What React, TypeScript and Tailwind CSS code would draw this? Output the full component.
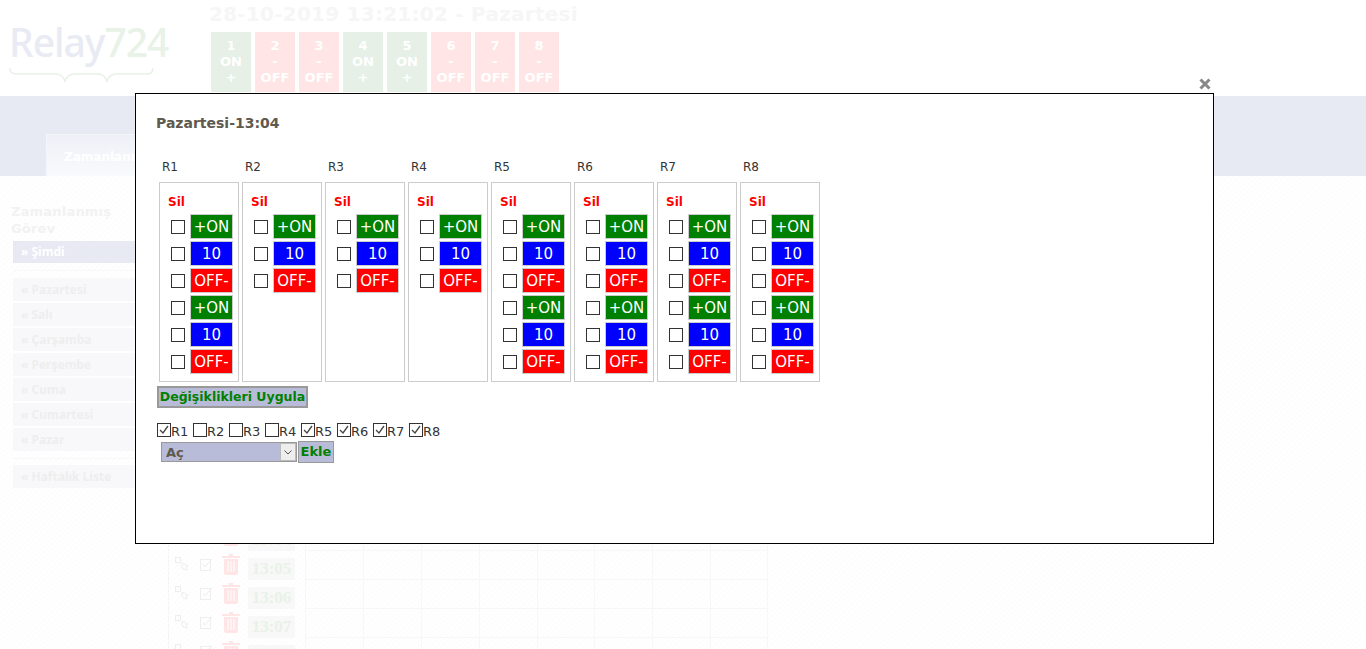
import React from 'react';

const tiles = [
  { n: 1, on: true },
  { n: 2, on: false },
  { n: 3, on: false },
  { n: 4, on: true },
  { n: 5, on: true },
  { n: 6, on: false },
  { n: 7, on: false },
  { n: 8, on: false },
];

const days = ['Pazartesi', 'Salı', 'Çarşamba', 'Perşembe', 'Cuma', 'Cumartesi', 'Pazar'];
const times = ['13:04', '13:05', '13:06', '13:07', '13:08'];

const Box: React.FC<{ checked?: boolean }> = ({ checked }) => (
  <span className="flex h-[14px] w-[14px] shrink-0 items-center justify-center border border-[#333333] bg-white">
    {checked && (
      <svg width="12" height="12" viewBox="0 0 12 12" fill="none">
        <path d="M2 6l3 3 5-7" stroke="#444444" strokeWidth="1.3" />
      </svg>
    )}
  </span>
);

const CmdRow: React.FC<{ label: string; bg: string }> = ({ label, bg }) => (
  <div className="flex h-[27px] items-center pl-[11px]">
    <Box />
    <span
      className={`ml-[5px] flex h-[25px] w-[43px] items-center justify-center border border-[#cccccc] pt-px text-[15px] text-white ${bg}`}
    >
      {label}
    </span>
  </div>
);

const CmdSet = () => (
  <>
    <CmdRow label="+ON" bg="bg-[#008000]" />
    <CmdRow label="10" bg="bg-[#0000ff]" />
    <CmdRow label="OFF-" bg="bg-[#ff0000]" />
  </>
);

const RelayColumn: React.FC<{ name: string; double: boolean }> = ({ name, double }) => (
  <div className="w-[80px]">
    <div className="h-[23px] pl-[3px] text-[12px] leading-[16px] text-[#333333]">{name}</div>
    <div className="h-[200px] border border-[#cccccc] pt-[11px]">
      <div className="h-[19px] pl-[8px] text-[12px] font-bold leading-[16px] text-[#ff0000]">Sil</div>
      <CmdSet />
      {double && <CmdSet />}
    </div>
  </div>
);

const BackgroundRow: React.FC<{ time: string }> = ({ time }) => (
  <div className="flex h-[29px]">
    <div className="flex w-[137px] items-start border-l border-dotted border-[#eeeeee] pl-[6px] pt-[4px]">
      <svg width="15" height="14" viewBox="0 0 15 14" fill="none" stroke="#eeeeee" className="mt-[3px]">
        <rect x="0.5" y="0.5" width="5" height="5" />
        <path d="M7 6l6 3-2 1 1 3-3-1-2-1z" />
      </svg>
      <svg width="14" height="13" viewBox="0 0 14 13" fill="none" stroke="#eeeeee" className="ml-[10px] mt-[4px]">
        <rect x="0.5" y="1.5" width="10" height="11" />
        <path d="M3 6l2 3 7-8" />
      </svg>
      <svg width="18" height="21" viewBox="0 0 18 21" className="ml-[8px]" fill="#ffe5e5">
        <path d="M7 0h4v2h7v2H0V2h7zM2 5h14v14a2 2 0 01-2 2H4a2 2 0 01-2-2z" />
        <path d="M6 7v11M9 7v11M12 7v11" stroke="#ffffff" />
      </svg>
      <div className="ml-[8px] mt-[4px] flex h-[22px] w-[47px] items-center justify-center bg-[#f8f8f8] font-['Liberation_Serif',serif] text-[17px] font-bold text-[#e8f2e6]">
        {time}
      </div>
    </div>
    <div className="grid w-[463px] grid-cols-8 border-t border-[#f7f7f7]">
      {Array.from({ length: 8 }).map((_, i) => (
        <div key={i} className="border-l border-[#f7f7f7] last:border-r" />
      ))}
    </div>
  </div>
);

export default function App() {
  return (
    <div className="relative h-[649px] w-[1366px] overflow-hidden bg-white font-['DejaVu_Sans',sans-serif]">
      {/* 背景ページ */}
      <header className="flex h-[96px]">
        <div className="w-[209px] pl-[9px] pt-[16px]">
          <div className="font-['Noto_Sans',sans-serif] text-[39px] font-medium leading-[52px] tracking-[-1px]">
            <span className="text-[#e8ebf3]">Relay</span>
            <span className="text-[#e8f2e6]">724</span>
          </div>
          <svg width="150" height="16" viewBox="0 0 150 16" fill="none" stroke="#e8f2e6" strokeWidth="1.5">
            <path d="M1 0c0 6 4 6 10 6h35c6 0 9 3 10 8 1-5 4-8 10-8h22c6 0 9 3 10 8 1-5 4-8 10-8h30c4 0 6-2 6-6" />
          </svg>
        </div>
        <div>
          <div className="h-[32px] whitespace-nowrap pt-px text-[20px] font-bold leading-[26px] tracking-[0.25px] text-[#f6f6f6]">
            28-10-2019 13:21:02 - Pazartesi
          </div>
          <div className="ml-[2px] flex gap-[4px]">
            {tiles.map(t => (
              <div
                key={t.n}
                className={`flex h-[60px] w-[40px] flex-col items-center justify-center text-[13px] font-bold leading-[16px] text-white ${
                  t.on ? 'bg-[#e6f0e6]' : 'bg-[#ffe5e5]'
                }`}
              >
                <span>{t.n}</span>
                <span>{t.on ? 'ON' : '-'}</span>
                <span>{t.on ? '+' : 'OFF'}</span>
              </div>
            ))}
          </div>
        </div>
      </header>

      <div className="flex h-[80px] items-end bg-[#e7eaf3] pl-[46px]">
        <div className="h-[42px] w-[180px] border border-b-0 border-[#f4f5fa] bg-gradient-to-b from-[#eef0f7] to-[#f9fafc] pl-[17px] pt-[13px] text-[12px] font-bold text-white">
          Zamanlanmış Görev
        </div>
      </div>

      <main className="flex h-[473px] bg-[repeating-linear-gradient(135deg,#fdfdfd_0px,#fdfdfd_2px,#ffffff_2px,#ffffff_4px)]">
        <aside className="w-[168px] pl-[13px] pt-[27px]">
          <div className="-ml-[2px] h-[38px] text-[13px] font-bold leading-[17px] tracking-[0.2px] text-[#f2f2f2]">
            Zamanlanmış
            <br />
            Görev
          </div>
          <div className="flex h-[22px] w-[140px] items-center bg-[#e7eaf3] pl-[8px] font-['Noto_Sans',sans-serif] text-[12px] font-bold text-white">
            » Şimdi
          </div>
          <div className="mb-[7px] mt-[7px] border-t border-dotted border-[#f2f2f2]" />
          <div className="flex flex-col gap-[2px]">
            {days.map(d => (
              <div
                key={d}
                className="flex h-[23px] w-[140px] items-center bg-[#f8f8fa] pl-[8px] font-['Noto_Sans',sans-serif] text-[12px] font-bold text-[#eeeeee]"
              >
                « {d}
              </div>
            ))}
          </div>
          <div className="mb-[6px] mt-[7px] border-t border-dotted border-[#f2f2f2]" />
          <div className="flex h-[23px] w-[140px] items-center bg-[#f8f8fa] pl-[8px] font-['Noto_Sans',sans-serif] text-[12px] font-bold text-[#eeeeee]">
            « Haftalık Liste
          </div>
        </aside>
        <section className="pt-[345px]">
          {times.map(t => (
            <BackgroundRow key={t} time={t} />
          ))}
        </section>
      </main>

      {/* 閉じるアイコン */}
      <svg width="12" height="12" viewBox="0 0 12 12" className="absolute left-[1199px] top-[78px]" stroke="#888888" strokeWidth="3">
        <path d="M1.5 1.5l9 9M10.5 1.5l-9 9" />
      </svg>

      {/* モーダル */}
      <div className="absolute left-[135px] top-[93px] h-[451px] w-[1079px] border border-black bg-white pl-[20px] pt-[21px]">
        <h2 className="h-[40px] text-[14px] font-bold leading-[16px] text-[#5f5a4e]">Pazartesi-13:04</h2>
        <div className="flex gap-[3px] pl-[3px] pt-[4px]">
          {['R1', 'R2', 'R3', 'R4', 'R5', 'R6', 'R7', 'R8'].map((r, i) => (
            <RelayColumn key={r} name={r} double={i === 0 || i >= 4} />
          ))}
        </div>
        <button className="ml-px mt-[4px] h-[22px] w-[151px] whitespace-nowrap border-2 border-[#999999] bg-[#b8bcd8] text-[12.5px] font-bold text-[#008000]">
          Değişiklikleri Uygula
        </button>
        <div className="ml-px mt-[15px] flex h-[14px] items-center gap-[4px] text-[13px] text-[#333333]">
          {['R1', 'R2', 'R3', 'R4', 'R5', 'R6', 'R7', 'R8'].map((r, i) => (
            <span key={r} className="flex w-[32px] items-center">
              <Box checked={i === 0 || i >= 4} />
              <span className="pt-[3px]">{r}</span>
            </span>
          ))}
        </div>
        <div className="ml-[5px] mt-[4px] flex items-center gap-px">
          <div className="relative h-[20px] w-[136px]">
            <select className="block h-full w-full appearance-none border border-[#999999] bg-[#b8bcd8] pl-[4px] text-[13px] font-bold text-[#5f5a4e]">
              <option>Aç</option>
            </select>
            <span className="absolute right-px top-px flex h-[18px] w-[16px] items-center justify-center border border-[#bbbbbb] bg-[#eeeeee]">
              <svg width="8" height="5" viewBox="0 0 8 5" fill="none" stroke="#555555">
                <path d="M0.5 0.5L4 4l3.5-3.5" />
              </svg>
            </span>
          </div>
          <button className="h-[22px] w-[36px] border border-[#999999] bg-[#b8bcd8] text-[13px] font-bold text-[#008000]">Ekle</button>
        </div>
      </div>
    </div>
  );
}
